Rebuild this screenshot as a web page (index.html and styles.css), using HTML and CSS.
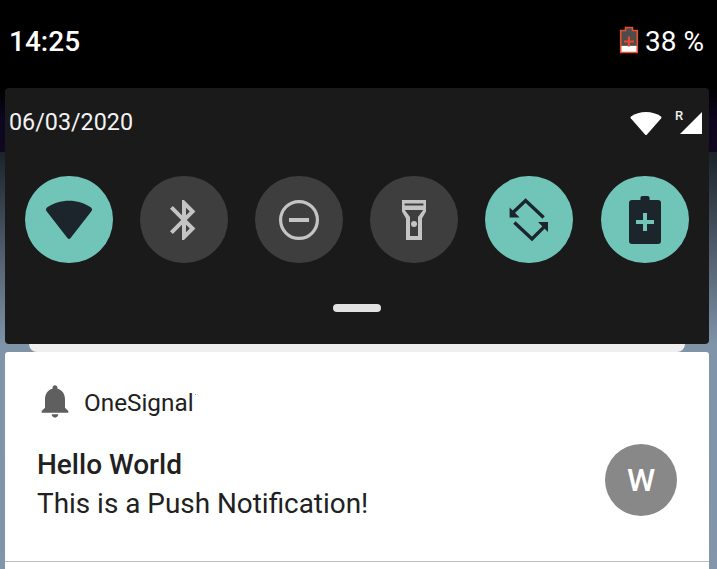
FILE: index.html
```html
<!DOCTYPE html>
<html lang="en">

<head>
    <meta charset="UTF-8">
    <meta name="viewport" content="width=device-width, initial-scale=1.0">
    <title>Notification shade</title>
    <link rel="stylesheet" href="styles.css">
</head>

<body>

    <div class="status-bar">
        <span class="clock">14:25</span>
        <div class="battery-status">
            <svg class="battery-icon" width="20" height="28" viewBox="0 0 20 28">
                <path d="M1.7 19.500h16.600v7H1.700z" fill="#fff" />
                <path d="M1.700 4.500h4.800V1.500h7v3h4.800v15H1.700z" fill="#4c4c4c" />
                <path d="M6.500 4.500V1.500h7v3h4.800v22H1.700v-22z" fill="none" stroke="#e8502f" stroke-width="1.600" />
                <path d="M5 15.500h10M10 10.500v10" fill="none" stroke="#f0442c" stroke-width="2.200" />
            </svg>
            <span class="battery-level">38 %</span>
        </div>
    </div>

    <div class="panel">
        <div class="panel-top">
            <span class="date">06/03/2020</span>
            <div class="panel-signals">
                <svg width="32" height="25" viewBox="0 0 32 25">
                    <path d="M1 5.500C5 2.500 10.500 1 16 1s11 1.500 15 4.500q1 .8.200 1.800L17 23.500q-1 1-2 0L.8 7.300Q0 6.300 1 5.500z" fill="#fff" />
                </svg>
                <div class="signal-wrap">
                    <span class="roaming">R</span>
                    <svg width="22" height="22" viewBox="0 0 22 22">
                        <path d="M22 0v22H0z" fill="#fff" />
                    </svg>
                </div>
            </div>
        </div>

        <div class="tiles">
            <div class="tile on">
                <svg width="48" height="48" viewBox="0 0 24 24">
                    <path d="M1 5.800C4 3.600 8 2.400 12 2.400s8 1.200 11 3.400q1 .8.300 1.700L12.800 21q-.8 1-1.600 0L.7 7.500Q0 6.600 1 5.800z" />
                </svg>
            </div>
            <div class="tile">
                <svg width="48" height="48" viewBox="0 0 24 24">
                    <path d="M17.710 7.710L12 2h-1v7.590L6.410 5 5 6.410 10.590 12 5 17.590 6.410 19 11 14.410V22h1l5.710-5.710-4.300-4.290 4.300-4.290zM13 5.830l1.880 1.880L13 9.590V5.830zm1.880 10.460L13 18.170v-3.760l1.880 1.880z" />
                </svg>
            </div>
            <div class="tile">
                <svg width="48" height="48" viewBox="0 0 24 24">
                    <circle cx="12" cy="12" r="9.200" fill="none" stroke="#c4c4c4" stroke-width="1.600" />
                    <path d="M7 11h10v2H7z" />
                </svg>
            </div>
            <div class="tile">
                <svg width="48" height="48" viewBox="0 0 24 24">
                    <path fill-rule="evenodd" d="M6 2h12v5.800l-2 3.400V22H8V11.200L6 7.800zM7.300 3.700v1.100h9.400V3.700zM7.400 7l2.600 3.500V20h4v-9.500L16.600 7z" />
                    <circle cx="12" cy="14" r="1.500" />
                </svg>
            </div>
            <div class="tile on">
                <svg width="48" height="48" viewBox="0 0 24 24">
                    <path d="M19.300 10.700L10.300 2.300 4 8.300M4.700 13.200l8.800 8.300 6.200-6.200" fill="none" stroke="#1c252c" stroke-width="1.700" />
                    <path d="M2.300 10.800v-5l5 5zM21.500 13v5l-5-5z" />
                </svg>
            </div>
            <div class="tile on">
                <svg width="48" height="48" viewBox="0 0 24 24">
                    <path d="M9.700 2V1q0-1 1-1h2.600q1 0 1 1v1h4.200q1.500 0 1.500 1.500v19q0 1.500-1.500 1.500h-13Q4 24 4 22.500v-19Q4 2 5.500 2z" />
                    <path d="M11 8.500h2V12h3.500v2H13v3.500h-2V14H7.500v-2H11z" fill="#70c4b8" />
                </svg>
            </div>
        </div>

        <div class="handle"></div>
    </div>

    <div class="peek"></div>

    <div class="card">
        <div class="notification">
            <div class="app-row">
                <svg width="40" height="40" viewBox="0 0 24 24">
                    <path d="M12 22c1.100 0 2-.9 2-2h-4c0 1.100.89 2 2 2zm6-6v-5c0-3.070-1.640-5.640-4.500-6.320V4c0-.83-.67-1.500-1.500-1.500s-1.500.67-1.500 1.500v.68C7.630 5.360 6 7.920 6 11v5l-2 2v1h16v-1l-2-2z" />
                </svg>
                <span class="app-name">OneSignal</span>
            </div>
            <div class="message-row">
                <div class="message">
                    <div class="message-title">Hello World</div>
                    <div class="message-body">This is a Push Notification!</div>
                </div>
                <div class="avatar">W</div>
            </div>
        </div>
    </div>

</body>

</html>
```

FILE: styles.css
```css
* {
    box-sizing: border-box;
}

body {
    margin: 0;
    height: 569px;
    overflow: hidden;
    display: flex;
    flex-direction: column;
    font-family: 'Roboto', 'Liberation Sans', sans-serif;
    background: linear-gradient(to bottom, #000 88px, #0e0620 120px, #100720 152px, #1b2229 152px, #4a5664 240px, #7f93a9 345px, #8295aa 569px);
}

.status-bar {
    height: 88px;
    flex: none;
    display: flex;
    justify-content: space-between;
    align-items: center;
    padding: 0 13px 6px 9px;
    background: #000;
    color: #fff;
}

.clock {
    font-size: 28px;
    font-weight: 500;
}

.battery-status {
    display: flex;
    align-items: center;
    gap: 6px;
}

.battery-icon {
    margin-bottom: 3px;
}

.battery-level {
    font-size: 28px;
}

.panel {
    flex: none;
    height: 256px;
    margin: 0 8px 0 5px;
    background: #1a1a1a;
    border-radius: 4px;
}

.panel-top {
    height: 68px;
    display: flex;
    justify-content: space-between;
    align-items: center;
    padding: 0 7px 0 4px;
}

.date {
    color: #f2f2f2;
    font-size: 23.300px;
}

.panel-signals {
    display: flex;
    align-items: center;
    gap: 18px;
    padding-top: 2px;
}

.signal-wrap {
    position: relative;
    height: 22px;
}

.signal-wrap svg {
    display: block;
}

.roaming {
    position: absolute;
    left: -5px;
    top: -4px;
    color: #eee;
    font-size: 13px;
    font-weight: 500;
}

.tiles {
    display: flex;
    gap: 27.600px;
    margin-top: 20px;
    padding-left: 20.300px;
}

.tile {
    width: 87.400px;
    height: 87.400px;
    border-radius: 50%;
    background: #3e3e3e;
    display: flex;
    justify-content: center;
    align-items: center;
    fill: #c4c4c4;
}

.tile:last-child {
    margin-left: 1px;
}

.tile.on {
    background: #70c4b8;
    fill: #1c252c;
}

.handle {
    width: 48px;
    height: 8px;
    margin: 40.600px auto 0;
    background: #e2e2e2;
    border-radius: 4px;
}

.peek {
    flex: none;
    height: 8px;
    margin: 0 32px 0 29px;
    background: #efefef;
    border-radius: 0 0 8px 8px;
}

.card {
    flex: 1;
    margin: 0 8px 0 5px;
    background: #fff;
    border-radius: 3px 3px 0 0;
}

.notification {
    height: 210px;
    border-bottom: 1px solid #bdbdbd;
    padding: 29px 32px 0 32px;
}

.app-row {
    display: flex;
    align-items: center;
    fill: #5f5f5f;
    height: 40px;
}

.app-row svg {
    margin-left: -2px;
}

.app-name {
    position: relative;
    margin-left: 9px;
    margin-top: 2px;
    font-size: 24.300px;
    color: #212121;
}

.app-name::after {
    content: "";
    position: absolute;
    right: -2px;
    top: 6px;
    width: 1px;
    height: 1px;
    background: #999;
}

.message-row {
    display: flex;
    justify-content: space-between;
    align-items: flex-start;
    margin-top: 23px;
}

.message-title {
    margin-top: 4px;
    font-size: 28px;
    font-weight: 500;
    color: #212121;
}

.message-body {
    margin-top: 6px;
    font-size: 27.900px;
    color: #212121;
}

.avatar {
    width: 72px;
    height: 72px;
    border-radius: 50%;
    background: #888;
    color: #fff;
    font-size: 32px;
    font-weight: 500;
    display: flex;
    justify-content: center;
    align-items: center;
}
```
